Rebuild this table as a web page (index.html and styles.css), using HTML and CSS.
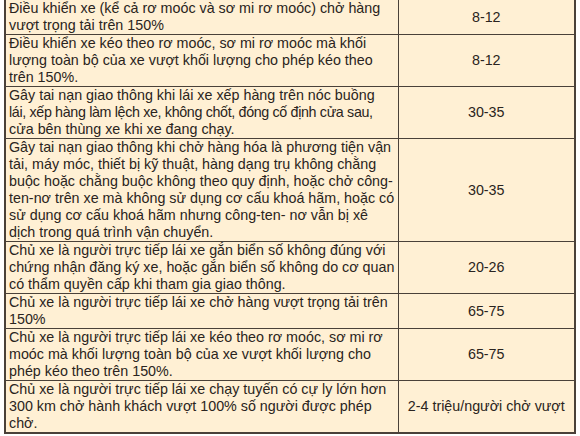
FILE: index.html
```html
<!DOCTYPE html>
<html lang="vi">
<head>
<meta charset="utf-8">
<link rel="stylesheet" href="styles.css">
</head>
<body>
<table class="fines">
  <colgroup><col class="c-desc"><col class="c-amt"></colgroup>
  <tbody>
    <tr><td class="desc">Điều khiển xe (kể cả rơ moóc và sơ mi rơ moóc) chở hàng<br>vượt trọng tải trên 150%</td><td class="amt">8-12</td></tr>
    <tr><td class="desc">Điều khiển xe kéo theo rơ moóc, sơ mi rơ moóc mà khối<br>lượng toàn bộ của xe vượt khối lượng cho phép kéo theo<br>trên 150%.</td><td class="amt">8-12</td></tr>
    <tr><td class="desc">Gây tai nạn giao thông khi lái xe xếp hàng trên nóc buồng<br><span class="tight">lái, xếp hàng làm lệch xe, không chốt, đóng cố định cửa sau,</span><br>cửa bên thùng xe khi xe đang chạy.</td><td class="amt">30-35</td></tr>
    <tr><td class="desc">Gây tai nạn giao thông khi chở hàng hóa là phương tiện vận<br>tải, máy móc, thiết bị kỹ thuật, hàng dạng trụ không chằng<br>buộc hoặc chằng buộc không theo quy định, hoặc chở công-<br>ten-nơ trên xe mà không sử dụng cơ cấu khoá hãm, hoặc có<br>sử dụng cơ cấu khoá hãm nhưng công-ten- nơ vẫn bị xê<br>dịch trong quá trình vận chuyển.</td><td class="amt">30-35</td></tr>
    <tr><td class="desc">Chủ xe là người trực tiếp lái xe gắn biển số không đúng với<br>chứng nhận đăng ký xe, hoặc gắn biển số không do cơ quan<br>có thẩm quyền cấp khi tham gia giao thông.</td><td class="amt">20-26</td></tr>
    <tr><td class="desc">Chủ xe là người trực tiếp lái xe chở hàng vượt trọng tải trên<br>150%</td><td class="amt">65-75</td></tr>
    <tr><td class="desc">Chủ xe là người trực tiếp lái xe kéo theo rơ moóc, sơ mi rơ<br>moóc mà khối lượng toàn bộ của xe vượt khối lượng cho<br>phép kéo theo trên 150%.</td><td class="amt">65-75</td></tr>
    <tr><td class="desc">Chủ xe là người trực tiếp lái xe chạy tuyến có cự ly lớn hơn<br>300 km chở hành khách vượt 100% số người được phép<br>chở.</td><td class="amt">2-4 triệu/người chở vượt</td></tr>
  </tbody>
</table>
</body>
</html>
```
FILE: styles.css
```css
html, body {
  margin: 0;
  padding: 0;
  background: #ffffff;
}
body {
  padding-left: 4px;
  font-family: "Liberation Sans", Arial, sans-serif;
  font-size: 14.3px;
  color: #2a2420;
}
.fines {
  margin-top: -2px;
  border-collapse: collapse;
  width: 570px;
  background: #fff0d4;
  border: 2px solid #4a4139;
  table-layout: fixed;
}
.c-desc { width: 393px; }
.c-amt { width: 177px; }
.fines td {
  border: 1.5px solid #4a4139;
  line-height: 17px;
  vertical-align: middle;
}
.desc {
  padding: 0 0 0 3px;
  white-space: nowrap;
  overflow: hidden;
}
.tight {
  letter-spacing: -0.35px;
}
.amt {
  text-align: center;
  padding: 0 4px;
}
```
